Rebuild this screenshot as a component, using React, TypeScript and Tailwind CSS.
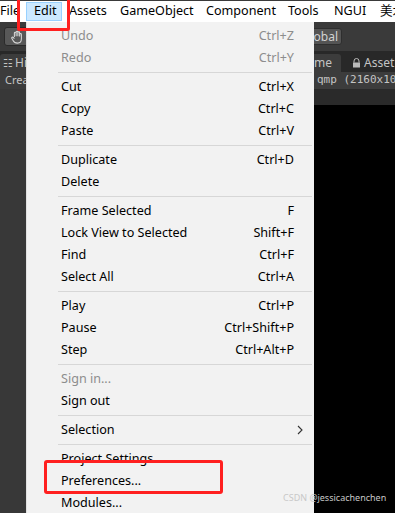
import React from 'react'

type Item = { label: string; shortcut?: string; disabled?: boolean; submenu?: boolean } | 'sep'

const items: Item[] = [
  { label: 'Undo', shortcut: 'Ctrl+Z', disabled: true },
  { label: 'Redo', shortcut: 'Ctrl+Y', disabled: true },
  'sep',
  { label: 'Cut', shortcut: 'Ctrl+X' },
  { label: 'Copy', shortcut: 'Ctrl+C' },
  { label: 'Paste', shortcut: 'Ctrl+V' },
  'sep',
  { label: 'Duplicate', shortcut: 'Ctrl+D' },
  { label: 'Delete' },
  'sep',
  { label: 'Frame Selected', shortcut: 'F' },
  { label: 'Lock View to Selected', shortcut: 'Shift+F' },
  { label: 'Find', shortcut: 'Ctrl+F' },
  { label: 'Select All', shortcut: 'Ctrl+A' },
  'sep',
  { label: 'Play', shortcut: 'Ctrl+P' },
  { label: 'Pause', shortcut: 'Ctrl+Shift+P' },
  { label: 'Step', shortcut: 'Ctrl+Alt+P' },
  'sep',
  { label: 'Sign in...', disabled: true },
  { label: 'Sign out' },
  'sep',
  { label: 'Selection', submenu: true },
  'sep',
  { label: 'Project Settings' },
  { label: 'Preferences...' },
  { label: 'Modules...' },
]

// menu bar entries with the box width each one takes
const menus: { name: string; w: string }[] = [
  { name: 'File', w: 'w-[26px]' },
  { name: 'Edit', w: 'w-[36px]' },
  { name: 'Assets', w: 'w-[51px]' },
  { name: 'GameObject', w: 'w-[86px]' },
  { name: 'Component', w: 'w-[82px]' },
  { name: 'Tools', w: 'w-[46px]' },
  { name: 'NGUI', w: 'w-[46px]' },
  { name: '美术', w: 'w-[40px]' },
]

function HandIcon() {
  return (
    <svg width="14" height="14" viewBox="0 0 16 16" fill="none" stroke="#d8d8d8" strokeWidth="1.2" strokeLinejoin="round">
      <path d="M5 8V3.5a1 1 0 0 1 2 0V7M7 7V2.5a1 1 0 0 1 2 0V7M9 7V3a1 1 0 0 1 2 0v4.5M11 7.5V5a1 1 0 0 1 2 0v5c0 3-2 5-4.5 5S4.5 14 3.5 12L2 9.5a1 1 0 0 1 1.7-1L5 10" />
    </svg>
  )
}

function EditMenu() {
  return (
    <div className="absolute left-[26px] top-[22px] w-[288px] h-[500px] bg-[#f2f2f2] border-l border-[#e0e0e0] pt-[3px] text-[12.6px] leading-[22px]">
      {items.map((it, i) =>
        it === 'sep' ? (
          <div key={i} className="ml-[31px] mr-[2px] my-[3px] h-px bg-[#d7d7d7]" />
        ) : (
          <div key={i} className={`flex h-[22px] items-center pl-[34px] pr-[20px] whitespace-nowrap ${it.disabled ? 'text-[#8d8d8d]' : 'text-black'}`}>
            <span className="flex-1">{it.label}</span>
            {it.shortcut && <span>{it.shortcut}</span>}
            {it.submenu && (
              <svg width="6" height="10" viewBox="0 0 6 10" className="mr-[-9px]" fill="none" stroke="#333" strokeWidth="1.1">
                <path d="M1 1l4 4-4 4" />
              </svg>
            )}
          </div>
        )
      )}
    </div>
  )
}

export default function App() {
  return (
    <div className="relative w-[395px] h-[513px] overflow-hidden bg-black" style={{ fontFamily: '"Noto Sans", "Noto Sans CJK SC", sans-serif' }}>
      {/* menu bar */}
      <div className="h-[22px] bg-white border-t border-[#3a3a3a] flex items-center text-[12.6px] text-black whitespace-nowrap">
        {menus.map((m) =>
          m.name === 'Edit' ? (
            <div key={m.name} className={`${m.w} shrink-0 h-[19px] pl-[7px] flex items-center bg-[#cce8ff] border border-[#99d1ff]`}>
              {m.name}
            </div>
          ) : (
            <div key={m.name} className={`${m.w} shrink-0 ${m.name === 'File' ? 'pl-0' : 'pl-[7px]'}`}>
              {m.name}
            </div>
          )
        )}
      </div>

      {/* toolbar */}
      <div className="h-[29px] bg-[#3a3a3a] flex items-center">
        <div className="ml-[4px] w-[26px] h-[19px] rounded-[3px] bg-[#585858] border border-[#2a2a2a] flex items-center justify-center">
          <HandIcon />
        </div>
        <div className="ml-[268px] h-[17px] w-[44px] rounded-[3px] bg-[#545454] border border-[#2e2e2e] text-[12px] text-[#d2d2d2] flex items-center justify-end pr-[3px]">
          Global
        </div>
      </div>

      {/* tabs */}
      <div className="h-[21px] bg-[#282828] flex items-end text-[12px] text-[#c4c4c4] whitespace-nowrap">
        <div className="h-[18px] w-[60px] shrink-0 bg-[#3c3c3c] rounded-t-[3px] flex items-center pl-[3px] gap-[2px]">
          <span className="text-[11px]">☷</span> Hierarchy
        </div>
        <div className="ml-[240px] h-[18px] w-[41px] shrink-0 bg-[#3c3c3c] rounded-t-[3px] flex items-center justify-end pr-[9px]">
          Game
        </div>
        <div className="ml-[11px] h-[18px] flex items-center gap-[3px] text-[#c4c4c4]">
          <svg width="9" height="10" viewBox="0 0 9 10">
            <path d="M2 4.5V3a2.5 2.5 0 0 1 5 0v1.5" fill="none" stroke="#bbb" strokeWidth="1" />
            <rect x="1" y="4.5" width="7" height="5" fill="#bbb" />
          </svg>
          Asset
        </div>
      </div>

      {/* sub toolbar */}
      <div className="h-[17px] bg-[#3c3c3c] flex items-center text-[11px] text-[#c4c4c4] whitespace-nowrap">
        <span className="ml-[5px] w-[40px] shrink-0">Create</span>
        <span className="ml-[272px] shrink-0" style={{ fontFamily: '"DejaVu Sans Mono", monospace' }}>qmp (2160x10</span>
      </div>

      {/* body */}
      <div className="flex h-[424px]">
        <div className="w-[26px] bg-[#383838]" />
        <div className="flex-1 flex flex-col">
          <div className="h-[16px] bg-[#2a2a2a]" />
          <div className="flex-1 bg-black" />
        </div>
      </div>

      <EditMenu />

      {/* annotation boxes */}
      <div className="absolute left-[17px] top-[-6px] w-[53px] h-[37px] border-[3px] border-[#ff2020] rounded-[2px]" />
      <div className="absolute left-[44px] top-[460px] w-[179px] h-[34px] border-[3px] border-[#ff2020] rounded-[3px]" />

      <div className="absolute left-[283px] top-[491px] text-[9px] text-[#c8c8c8] whitespace-nowrap">CSDN @jessicachenchen</div>
    </div>
  )
}
